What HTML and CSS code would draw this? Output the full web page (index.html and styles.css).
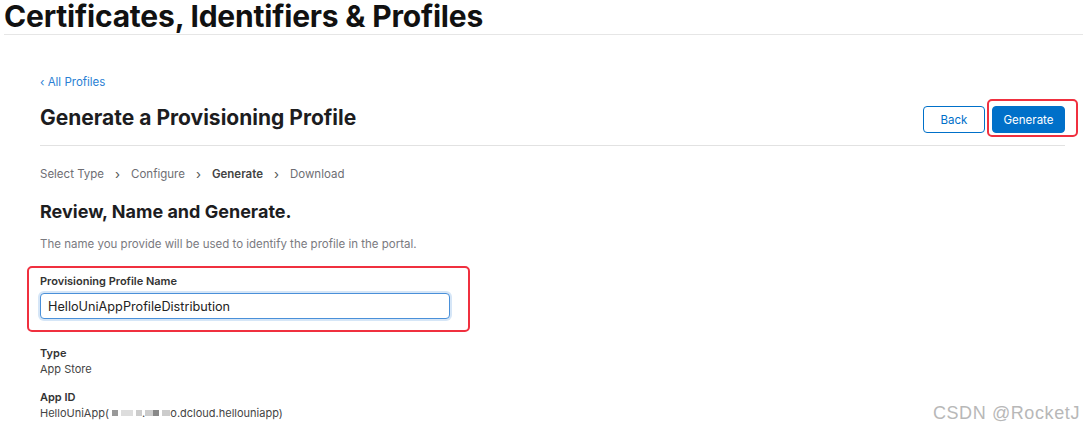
FILE: index.html
```html
<!DOCTYPE html>
<html>
<head>
<meta charset="utf-8">
<link rel="stylesheet" href="styles.css">
</head>
<body>
<header class="top">
  <h1 class="top-title">Certificates, Identifiers &amp; Profiles</h1>
</header>
<main class="content">
  <a class="back-link" href="#">‹ All Profiles</a>
  <div class="page-head">
    <h2 class="page-title">Generate a Provisioning Profile</h2>
    <div class="actions">
      <button class="btn btn-outline">Back</button>
      <button class="btn btn-primary">Generate<span class="mark mark-btn"></span></button>
    </div>
  </div>
  <nav class="steps">
    <span>Select Type</span><span class="chev">›</span>
    <span>Configure</span><span class="chev">›</span>
    <span class="current">Generate</span><span class="chev">›</span>
    <span>Download</span>
  </nav>
  <h3 class="section-title">Review, Name and Generate.</h3>
  <p class="desc">The name you provide will be used to identify the profile in the portal.</p>
  <div class="field">
    <span class="mark mark-field"></span>
    <label class="field-label">Provisioning Profile Name</label>
    <input class="field-input" type="text" value="HelloUniAppProfileDistribution">
  </div>
  <dl class="info">
    <dt>Type</dt>
    <dd>App Store</dd>
    <dt>App ID</dt>
    <dd>HelloUniApp( <span class="blur b1"></span><span class="blur b2"></span><span class="blur b3"></span>.<span class="blur b4"></span><span class="blur b5"></span> <span class="blur b6"></span>o.dcloud.hellouniapp)</dd>
  </dl>
</main>
<div class="watermark">CSDN @RocketJ</div>
</body>
</html>
```

FILE: styles.css
```css
* { box-sizing: border-box; }
html, body { margin: 0; padding: 0; background: #fff; }
body {
  font-family: Inter, "Noto Sans", "Liberation Sans", sans-serif;
  color: #1d1d1f;
  width: 1083px;
  height: 432px;
  overflow: hidden;
  position: relative;
}
.top {
  margin-left: 4px;
  border-bottom: 1px solid #e6e6e6;
  height: 35px;
}
.top-title {
  margin: 0;
  font-size: 30px;
  font-weight: 700;
  line-height: 32px;
  letter-spacing: -0.2px;
  color: #111;
}
.content {
  padding: 0 18px 0 40px;
}
.back-link {
  display: block;
  margin-top: 40px;
  font-size: 11.5px;
  line-height: 14px;
  color: #2a7fd4;
  text-decoration: none;
}
.page-head {
  display: flex;
  justify-content: space-between;
  align-items: center;
  margin-top: 13px;
  padding-bottom: 12px;
  border-bottom: 1px solid #e2e2e2;
}
.page-title {
  margin: 0;
  font-size: 21px;
  font-weight: 700;
  line-height: 24px;
  color: #1d1d1f;
}
.actions {
  display: flex;
  gap: 7px;
  margin-top: 4px;
}
.btn {
  position: relative;
  height: 27px;
  border-radius: 4px;
  font-family: inherit;
  font-size: 11.5px;
  padding: 0;
  cursor: pointer;
}
.btn-outline {
  width: 62px;
  background: #fff;
  border: 1px solid #0070c9;
  color: #0070c9;
}
.btn-primary {
  width: 73px;
  background: #0070c9;
  border: 1px solid #0070c9;
  color: #fff;
}
.mark {
  position: absolute;
  border: 2px solid #f0303f;
  border-radius: 5px;
  pointer-events: none;
}
.mark-btn {
  left: -6px;
  top: -8px;
  right: -14px;
  bottom: -5px;
}
.steps {
  display: flex;
  align-items: center;
  margin-top: 21px;
  font-size: 11.5px;
  line-height: 14px;
  color: #6e6e73;
}
.steps .chev {
  margin: 0 11px;
  font-size: 13px;
  color: #555;
}
.steps .current {
  font-weight: 600;
  color: #444;
}
.section-title {
  margin: 21px 0 0;
  font-size: 18px;
  font-weight: 700;
  line-height: 20px;
  color: #1d1d1f;
}
.desc {
  margin: 16px 0 0;
  font-size: 11.5px;
  line-height: 13px;
  color: #7a7a7f;
}
.field {
  position: relative;
  margin-top: 24px;
  width: 410px;
}
.mark-field {
  left: -13px;
  top: -9px;
  right: -20px;
  bottom: -13px;
}
.field-label {
  display: block;
  font-size: 11px;
  font-weight: 600;
  line-height: 13px;
  color: #333;
}
.field-input {
  display: block;
  margin-top: 5px;
  width: 410px;
  height: 26px;
  padding: 0 7px;
  border: 1px solid #4a90d9;
  border-radius: 4px;
  box-shadow: 0 0 0 2px #d6e6f7;
  font-family: inherit;
  font-size: 12.7px;
  color: #222;
  outline: none;
}
.info {
  margin: 26px 0 0;
  font-size: 11px;
  line-height: 16px;
}
.info dt {
  font-weight: 600;
  color: #333;
}
.info dd {
  margin: 0 0 12px;
  color: #444;
}
.blur {
  display: inline-block;
  height: 6px;
  background: #bdbdbd;
  filter: blur(0.6px);
  vertical-align: 1px;
}
.b1 { width: 6px; background: #999; margin-right: 3px; }
.b2 { width: 12px; background: #ddd; margin-right: 3px; }
.b3 { width: 6px; background: #ccc; }
.b4 { width: 8px; background: #ccc; }
.b5 { width: 6px; background: #888; }
.b6 { width: 8px; background: #ccc; }
.watermark {
  position: absolute;
  right: 3px;
  bottom: 8px;
  font-family: "Liberation Sans", Arial, sans-serif;
  font-size: 18px;
  color: #b8b8b8;
  letter-spacing: 0.6px;
}
```
